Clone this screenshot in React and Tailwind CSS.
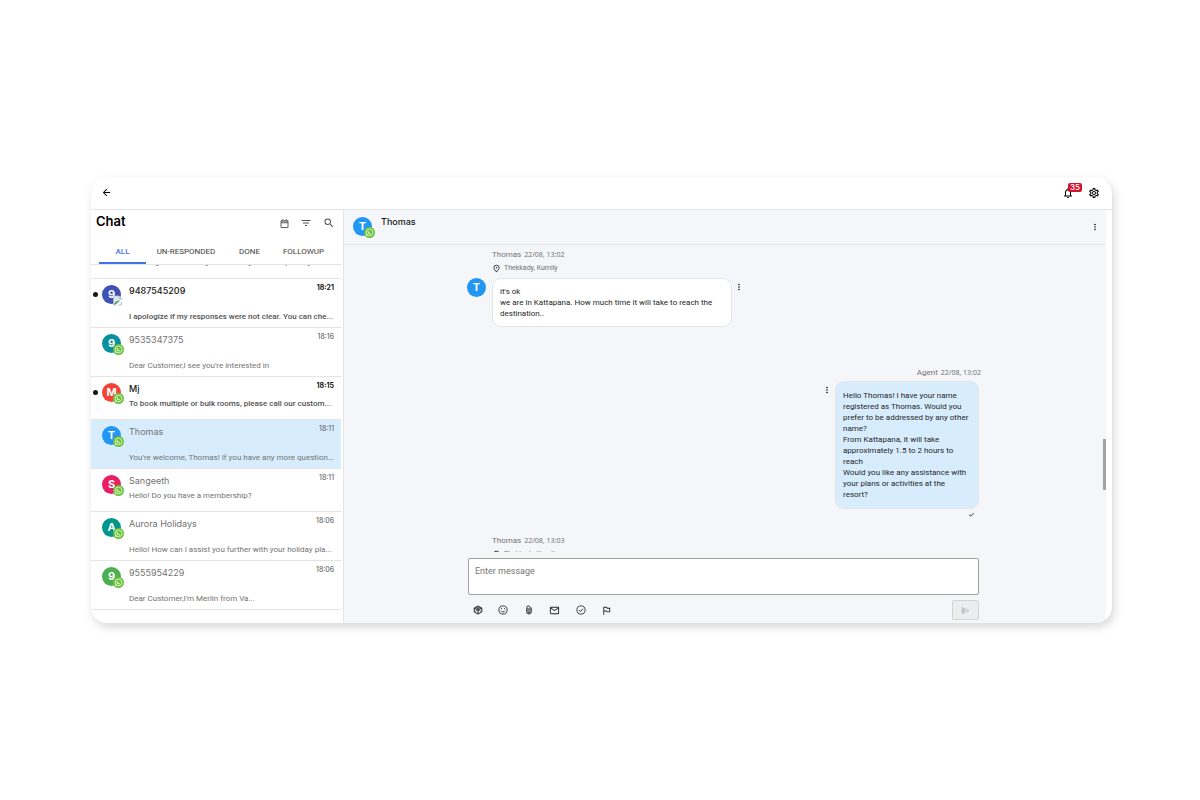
import { useState } from 'react'
import clsx from 'clsx'
import {
  MdArrowBack,
  MdCheck,
  MdFilterList,
  MdMailOutline,
  MdMoreVert,
  MdNotificationsNone,
  MdOutlinedFlag,
  MdOutlinePlace,
  MdOutlineSettings,
  MdSearch,
} from 'react-icons/md'

const TABS = [
  { key: 'all', label: 'ALL', width: 'w-[47px]' },
  { key: 'unresponded', label: 'UN-RESPONDED', width: 'w-20' },
  { key: 'done', label: 'DONE', width: 'w-[47px]' },
  { key: 'followup', label: 'FOLLOWUP', width: 'w-[61px]' },
]

const CHATS = [
  {
    id: 1,
    name: '9487545209',
    time: '18:21',
    preview: 'I apologize if my responses were not clear. You can che...',
    color: 'bg-[#3f51b5]',
    unread: true,
    broken: true,
  },
  {
    id: 2,
    name: '9535347375',
    time: '18:16',
    preview: "Dear Customer,I see you're interested in",
    color: 'bg-[#0a8f9c]',
  },
  {
    id: 3,
    name: 'Mj',
    time: '18:15',
    preview: 'To book multiple or bulk rooms, please call our custom...',
    color: 'bg-[#f44336]',
    unread: true,
    compact: true,
  },
  {
    id: 4,
    name: 'Thomas',
    time: '18:11',
    preview: "You're welcome, Thomas! If you have any more question...",
    color: 'bg-[#2196f3]',
  },
  {
    id: 5,
    name: 'Sangeeth',
    time: '18:11',
    preview: 'Hello! Do you have a membership?',
    color: 'bg-[#e91e63]',
    compact: true,
  },
  {
    id: 6,
    name: 'Aurora Holidays',
    time: '18:06',
    preview: 'Hello! How can I assist you further with your holiday pla...',
    color: 'bg-[#009688]',
  },
  {
    id: 7,
    name: '9555954229',
    time: '18:06',
    preview: "Dear Customer,I'm Merlin from Va...",
    color: 'bg-[#4caf50]',
  },
]

const CalendarIcon = () => (
  <svg className="size-[9px]" viewBox="0 0 18 18" fill="none" stroke="currentColor" strokeWidth="1.8">
    <path d="M2 3.500h14V17H2zM2 7.500h14M5.500 0v3.500M12.500 0v3.500" />
    <path d="M2 5.500h14" strokeWidth="1.2" />
  </svg>
)

const CubeIcon = () => (
  <svg className="size-[10px]" viewBox="0 0 20 20" fill="none" stroke="currentColor" strokeWidth="2" strokeLinejoin="round">
    <path d="M10 2l7.500 4v8L10 18l-7.500-4V6z" />
    <path d="M2.500 6L10 10l7.500-4M10 10v8" />
    <path d="M6 4l7.500 4M14 4L6.500 8" strokeWidth="1.500" />
    <path d="M3 13l7-3 7 3" strokeWidth="1" />
  </svg>
)

const SmileIcon = () => (
  <svg className="size-[10px]" viewBox="0 0 20 20" fill="none" stroke="currentColor" strokeWidth="1.7">
    <circle cx="10" cy="10" r="8.200" />
    <path d="M6 11.500c1.500 3.300 6.500 3.300 8 0" />
    <path d="M6 7.500h2M12 7.500h2" strokeWidth="2.200" />
  </svg>
)

const PaperclipIcon = () => (
  <svg className="size-[10px]" viewBox="0 0 20 20" fill="none" stroke="currentColor" strokeWidth="2">
    <path d="M14.500 5v8.500a4.500 4.500 0 0 1-9 0V5a3.200 3.200 0 0 1 6.400 0v8.500a1.900 1.900 0 0 1-3.800 0V6" />
  </svg>
)

const ResolveIcon = () => (
  <svg className="size-[10px]" viewBox="0 0 20 20" fill="none" stroke="currentColor" strokeWidth="1.7">
    <circle cx="10" cy="10" r="8.200" />
    <path d="M6 10.200l2.800 2.800L14 7.500" strokeWidth="2" />
  </svg>
)

const WhatsappBadge = () => (
  <svg className="absolute -right-[3px] -bottom-[2px] size-[11px]" viewBox="0 0 22 22">
    <circle cx="11" cy="11" r="11" fill="#6cc040" />
    <circle cx="11" cy="11" r="6.800" fill="none" stroke="#d8f5c4" strokeWidth="1.800" />
    <path d="M4 18l1.300-4.500 3 3z" fill="#d8f5c4" />
    <path d="M8 8c0 3.500 2.500 6 6 6" fill="none" stroke="#d8f5c4" strokeWidth="2.200" />
  </svg>
)

const BrokenImage = () => (
  <svg className="absolute -right-[2px] -bottom-[2px] size-[11px]" viewBox="0 0 22 22">
    <path d="M3 2h11l5 5v13H3z" fill="#dfe8f5" stroke="#b4bcc8" strokeWidth="1.5" />
    <path d="M14 2v5h5" fill="#fff" stroke="#9aa3ad" strokeWidth="1.5" />
    <path d="M4 19c2-6 7-8 12-8l-9 8z" fill="#4a9e3f" />
    <path d="M6 21L20 9v4L11 21z" fill="#fff" />
  </svg>
)

const Avatar = ({ letter, color, badge }) => (
  <span className={clsx('relative flex size-[19px] shrink-0 items-center justify-center rounded-full font-[Inter,sans-serif] text-[11px] font-bold text-white', color)}>
    {letter}
    {badge === 'whatsapp' && <WhatsappBadge />}
    {badge === 'broken' && <BrokenImage />}
  </span>
)

const IconButton = ({ label, className, children }) => (
  <button type="button" aria-label={label} className={clsx('flex items-center justify-center', className)}>
    {children}
  </button>
)

const ChatRow = ({ chat, active, onSelect }) => (
  <li>
    <button
      type="button"
      onClick={() => onSelect(chat.id)}
      className={clsx(
        'flex w-full items-start border-t border-neutral-200 pr-[7px] text-left',
        chat.compact ? 'h-[43px]' : 'h-[49px]',
        active && 'bg-[#d7edfe]'
      )}
    >
      <span className="flex w-[38px] shrink-0 items-center gap-1 pt-[6px] pl-[2px]">
        <span className={clsx('size-[5px] rounded-full', chat.unread && 'bg-neutral-900')} />
        <Avatar letter={chat.name[0]} color={chat.color} badge={chat.broken ? 'broken' : 'whatsapp'} />
      </span>
      <span className="flex h-full min-w-0 flex-1 flex-col justify-between pb-[5px]">
        <span className="flex justify-between">
          <span className={clsx('pt-[5px] text-[9px] leading-[13px]', chat.unread ? 'font-medium text-neutral-900' : 'text-neutral-500')}>
            {chat.name}
          </span>
          <span className={clsx('pt-[3px] text-[7px] leading-[11px]', chat.unread ? 'font-bold text-neutral-900' : 'text-neutral-600')}>
            {chat.time}
          </span>
        </span>
        <span
          className={clsx(
            'truncate font-[Roboto,sans-serif] text-[8px] leading-[10px]',
            chat.unread ? 'font-medium text-neutral-600' : 'text-neutral-500',
            chat.compact && 'mb-[5px]'
          )}
        >
          {chat.preview}
        </span>
      </span>
    </button>
  </li>
)

const Sidebar = () => {
  const [tab, setTab] = useState('all')
  const [selected, setSelected] = useState(4)

  return (
    <aside className="flex w-[253px] shrink-0 flex-col border-r border-neutral-200 bg-white pr-[2px]">
      <div className="flex h-[29px] items-start justify-between pt-px pr-[6px] pl-[5px]">
        <h1 className="text-[13px] leading-5 font-semibold text-black">Chat</h1>
        <div className="flex h-6 items-center gap-[11px] text-neutral-600">
          <IconButton label="Calendar"><CalendarIcon /></IconButton>
          <IconButton label="Filter"><MdFilterList size={12} /></IconButton>
          <IconButton label="Search"><MdSearch size={12} /></IconButton>
        </div>
      </div>
      <div className="flex h-[26px] shrink-0 justify-between border-b border-neutral-200 pr-[7px] pl-2">
        {TABS.map((t) => (
          <button
            key={t.key}
            type="button"
            onClick={() => setTab(t.key)}
            className={clsx(
              'border-b-2 pt-[2px] font-[Roboto,sans-serif] text-[8px] whitespace-nowrap',
              t.width,
              tab === t.key ? 'border-[#3f74e8] font-medium text-[#3f74e8]' : 'border-transparent text-neutral-700'
            )}
          >
            {t.label}
          </button>
        ))}
      </div>
      <ul className="flex-1">
        <li className="flex h-[13px] items-start overflow-hidden pl-[38px]">
          <span className="-mt-[7px] truncate font-[Roboto,sans-serif] text-[8px] leading-[10px] text-neutral-600">
            Please get in touch if you want any more help today
          </span>
        </li>
        {CHATS.map((chat) => (
          <ChatRow key={chat.id} chat={chat} active={chat.id === selected} onSelect={setSelected} />
        ))}
        <li className="border-t border-neutral-200" />
      </ul>
    </aside>
  )
}

const MessageMeta = ({ name, date, className }) => (
  <p className={clsx('flex items-center gap-[3px] leading-3 text-neutral-500', className)}>
    <span className="text-[8px]">{name}</span>
    <span className="font-['Noto_Sans',sans-serif] text-[7px]">{date}</span>
  </p>
)

const Location = ({ children }) => (
  <p className="flex items-center gap-[3px] text-[7px] leading-[14px] text-neutral-500">
    <MdOutlinePlace size={9} className="text-neutral-800" />
    {children}
  </p>
)

const Composer = () => {
  const [message, setMessage] = useState('')

  return (
    <form className="mx-auto w-[514px] max-w-full shrink-0 border-t border-neutral-100 pt-[5px] pr-[3px] pb-[3px]" onSubmit={(e) => e.preventDefault()}>
      <textarea
        aria-label="Message"
        placeholder="Enter message"
        value={message}
        onChange={(e) => setMessage(e.target.value)}
        className="block h-[37px] w-full resize-none rounded-[2px] border border-neutral-400 bg-white px-[6px] py-[6px] text-[9px] leading-3 placeholder:text-neutral-500"
      />
      <div className="mt-[5px] flex h-5 items-center justify-between">
        <div className="flex w-[144px] items-center justify-between pl-[5px] text-neutral-800">
          <IconButton label="Catalog"><CubeIcon /></IconButton>
          <IconButton label="Emoji"><SmileIcon /></IconButton>
          <IconButton label="Attach"><PaperclipIcon /></IconButton>
          <IconButton label="Mail"><MdMailOutline size={11} /></IconButton>
          <IconButton label="Resolve"><ResolveIcon /></IconButton>
          <IconButton label="Flag"><MdOutlinedFlag size={11} /></IconButton>
        </div>
        <button type="submit" aria-label="Send" disabled className="flex h-5 w-[27px] items-center justify-center rounded-[2px] border border-neutral-300 bg-[#ecedef] text-neutral-400">
          <svg className="size-[9px]" viewBox="0 0 18 18" fill="none" stroke="currentColor" strokeWidth="1.2">
            <path d="M2 3l14 6-14 6zM2 9h7M5 4.500v9" />
          </svg>
        </button>
      </div>
    </form>
  )
}

const Conversation = () => (
  <main className="relative mr-[6px] flex min-w-0 flex-1 flex-col bg-[#f4f6fa] font-[Roboto,sans-serif]">
    <header className="flex h-[35px] shrink-0 items-start border-b border-neutral-200 pt-[7px] pr-[6px] pl-[9px]">
      <Avatar letter="T" color="bg-[#2196f3]" badge="whatsapp" />
      <h2 className="ml-[9px] flex-1 font-[Inter,sans-serif] text-[9px] leading-[9px] font-medium text-neutral-900">Thomas</h2>
      <IconButton label="Conversation menu" className="mt-[5px]"><MdMoreVert size={10} /></IconButton>
    </header>
    <div className="mx-auto h-[307px] w-[516px] max-w-full overflow-hidden pr-[2px]">
      <div className="pt-1 pl-[25px]">
        <MessageMeta name="Thomas" date="22/08, 13:02" />
        <Location>Thekkady, Kumily</Location>
      </div>
      <div className="mt-[3px] flex items-start">
        <Avatar letter="T" color="bg-[#2196f3]" />
        <p className="ml-[6px] w-60 rounded-[9px] border border-neutral-200 bg-white px-[7px] py-[7px] text-[8px] leading-[11px] text-neutral-800">
          it's ok<br />
          we are in Kattapana. How much time it will take to reach the destination..
        </p>
        <IconButton label="Message menu" className="mt-1 ml-[2px]"><MdMoreVert size={10} /></IconButton>
      </div>
      <MessageMeta name="Agent" date="22/08, 13:02" className="mt-10 justify-end" />
      <div className="mt-[2px] flex items-start justify-end pr-[2px]">
        <IconButton label="Message menu" className="mt-1 mr-[3px]"><MdMoreVert size={10} /></IconButton>
        <p className="w-36 rounded-[9px] border border-neutral-200 bg-[#d7edfe] px-[7px] py-2 text-[8px] leading-[11px] text-neutral-800">
          Hello Thomas! I have your name registered as Thomas. Would you prefer to be addressed by any other name?<br />
          From Kattapana, it will take approximately 1.5 to 2 hours to reach<br />
          Would you like any assistance with your plans or activities at the resort?
        </p>
      </div>
      <MdCheck size={7} className="mt-[2px] mr-[6px] ml-auto" />
      <div className="mt-[17px] pl-[25px]">
        <MessageMeta name="Thomas" date="22/08, 13:03" />
        <Location>Thekkady, Kumily</Location>
      </div>
    </div>
    <Composer />
    <span className="absolute top-[229px] right-0 h-[51px] w-[3px] bg-neutral-400" />
  </main>
)

const App = () => (
  <div className="flex min-h-screen items-center bg-white pr-[88px] pl-[91px] font-[Inter,sans-serif]">
    <div className="min-w-0 flex-1 overflow-hidden rounded-2xl bg-white shadow-[2px_4px_10px_rgba(0,0,0,0.16)]">
      <nav className="flex h-[33px] items-center justify-between border-b border-neutral-200 pr-3 pb-px pl-[10px]">
        <IconButton label="Back"><MdArrowBack size={11} /></IconButton>
        <div className="flex items-center gap-[14px]">
          <IconButton label="Notifications" className="relative">
            <MdNotificationsNone size={12} />
            <span className="absolute -top-[4px] left-[6px] rounded-[2px] bg-[#d0142c] px-[2px] text-[8px] leading-[9px] font-medium text-white">35</span>
          </IconButton>
          <IconButton label="Settings"><MdOutlineSettings size={12} /></IconButton>
        </div>
      </nav>
      <div className="flex">
        <Sidebar />
        <Conversation />
      </div>
    </div>
  </div>
)

export default App
